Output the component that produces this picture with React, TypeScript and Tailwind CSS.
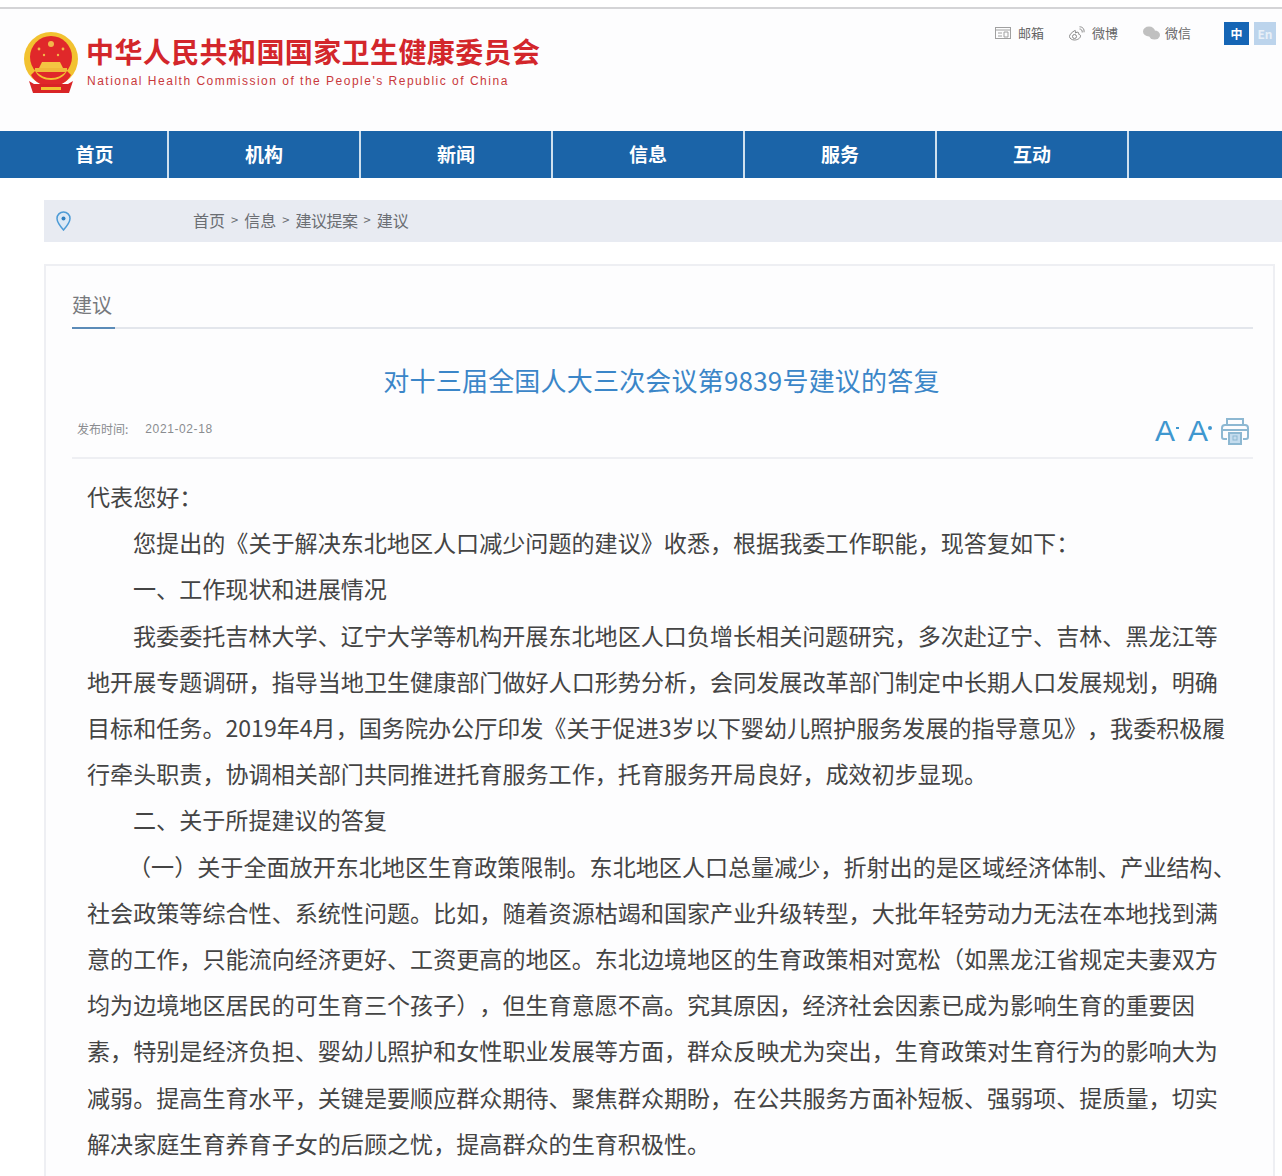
const cjk = "font-['Noto_Sans_CJK_SC','Noto_Sans_CJK_JP',sans-serif]";

const navItems = ["首页", "机构", "新闻", "信息", "服务", "互动"];

const bodyLines = [
  { text: "代表您好\uFF1A", pad: "" },
  { text: "您提出的《关于解决东北地区人口减少问题的建议》收悉\uFF0C根据我委工作职能\uFF0C现答复如下\uFF1A", pad: "pl-[46px]" },
  { text: "一、工作现状和进展情况", pad: "pl-[46px]" },
  { text: "我委委托吉林大学、辽宁大学等机构开展东北地区人口负增长相关问题研究\uFF0C多次赴辽宁、吉林、黑龙江等", pad: "pl-[46px]" },
  { text: "地开展专题调研\uFF0C指导当地卫生健康部门做好人口形势分析\uFF0C会同发展改革部门制定中长期人口发展规划\uFF0C明确", pad: "" },
  { text: "目标和任务。2019年4月\uFF0C国务院办公厅印发《关于促进3岁以下婴幼儿照护服务发展的指导意见》\uFF0C我委积极履", pad: "" },
  { text: "行牵头职责\uFF0C协调相关部门共同推进托育服务工作\uFF0C托育服务开局良好\uFF0C成效初步显现。", pad: "" },
  { text: "二、关于所提建议的答复", pad: "pl-[46px]" },
  { text: "\uFF08一\uFF09关于全面放开东北地区生育政策限制。东北地区人口总量减少\uFF0C折射出的是区域经济体制、产业结构、", pad: "pl-[41px]" },
  { text: "社会政策等综合性、系统性问题。比如\uFF0C随着资源枯竭和国家产业升级转型\uFF0C大批年轻劳动力无法在本地找到满", pad: "" },
  { text: "意的工作\uFF0C只能流向经济更好、工资更高的地区。东北边境地区的生育政策相对宽松\uFF08如黑龙江省规定夫妻双方", pad: "" },
  { text: "均为边境地区居民的可生育三个孩子\uFF09\uFF0C但生育意愿不高。究其原因\uFF0C经济社会因素已成为影响生育的重要因", pad: "" },
  { text: "素\uFF0C特别是经济负担、婴幼儿照护和女性职业发展等方面\uFF0C群众反映尤为突出\uFF0C生育政策对生育行为的影响大为", pad: "" },
  { text: "减弱。提高生育水平\uFF0C关键是要顺应群众期待、聚焦群众期盼\uFF0C在公共服务方面补短板、强弱项、提质量\uFF0C切实", pad: "" },
  { text: "解决家庭生育养育子女的后顾之忧\uFF0C提高群众的生育积极性。", pad: "" },
];

function Emblem() {
  return (
    <svg width="58" height="64" viewBox="0 0 58 64" className="shrink-0">
      <circle cx="29" cy="28" r="27" fill="#f2c230" />
      <circle cx="29" cy="26" r="21" fill="#e0282a" />
      <circle cx="29" cy="13" r="3" fill="#f2b84a" />
      <circle cx="17" cy="18" r="1.4" fill="#f2b84a" />
      <circle cx="41" cy="18" r="1.4" fill="#f2b84a" />
      <circle cx="22" cy="24" r="1.2" fill="#f2b84a" />
      <circle cx="36" cy="24" r="1.2" fill="#f2b84a" />
      <path d="M17 37h24l-3-6H20z" fill="#f4c542" />
      <path d="M13 41h32v-4H13z" fill="#f0b93a" />
      <path d="M9 44c4 8 12 11 20 11s16-3 20-11l-4-4c-3 6-9 9-16 9s-13-3-16-9z" fill="#e0282a" />
      <path d="M7 50l4 12h36l4-12-5 3H12z" fill="#d92426" />
      <path d="M19 56h20v3H19z" fill="#f2c230" />
    </svg>
  );
}

function MailIcon() {
  return (
    <svg width="16" height="14" viewBox="0 0 16 14" fill="none" stroke="#a0a0a0" strokeWidth="1">
      <rect x="0.5" y="1.5" width="15" height="11" />
      <path d="M0.500 4h15M3 7h4M3 10h4M9 6h4v5H9z" />
    </svg>
  );
}

function WeiboIcon() {
  return (
    <svg width="17" height="15" viewBox="0 0 16 15" fill="none" stroke="#8a8a8a" strokeWidth="1">
      <path d="M6.500 4.500C3.500 6 1 8.500 1 10.500c0 2 2.500 3.500 5 3.500 3 0 6-1.800 6-4 0-1.300-1.200-1.700-2-1.900.5-1.300 0-2.100-1.500-1.900L7 7c.3-1.700 0-2.800-.5-2.500z" />
      <circle cx="6" cy="10.500" r="2" />
      <path d="M11 3c1.800 0 3 1.300 2.700 3.500M11 .8c3.200 0 5 2.200 4.500 5.500" />
    </svg>
  );
}

function WechatIcon() {
  return (
    <svg width="17" height="14" viewBox="0 0 17 14" fill="#c0c0c0">
      <ellipse cx="6" cy="5.500" rx="6" ry="5" />
      <ellipse cx="11.500" cy="9" rx="5.500" ry="4.500" />
    </svg>
  );
}

function PinIcon() {
  return (
    <svg width="15" height="20" viewBox="0 0 15 20" fill="none">
      <path d="M7.500 19C4 15 1 11.500 1 7.500a6.500 6.500 0 0 1 13 0C14 11.500 11 15 7.500 19z" fill="#dbe8f5" stroke="#4d9bd6" strokeWidth="1.500" />
      <circle cx="7.500" cy="7.500" r="2" fill="#2f7fc0" />
    </svg>
  );
}

function PrintIcon() {
  return (
    <svg width="30" height="30" viewBox="0 0 30 30" fill="none" stroke="#8db8d2" strokeWidth="2">
      <path d="M7 9V3h16v6" />
      <path d="M7 23H4a2 2 0 0 1-2-2v-9a3 3 0 0 1 3-3h20a3 3 0 0 1 3 3v9a2 2 0 0 1-2 2h-3" />
      <path d="M2 14h26" />
      <rect x="9" y="17" width="12" height="11" fill="#c4dcee" />
      <rect x="13" y="20" width="4" height="4" strokeWidth="1" />
    </svg>
  );
}

export default function App() {
  return (
    <div className={`h-[1176px] w-[1282px] overflow-hidden bg-white ${cjk}`}>
      {/* Header */}
      <div className="h-[9px] border-b-2 border-[#d4d4d6]" />
      <header className="flex h-[122px] justify-between bg-[#fdfdfe]">
        <div className="flex items-start gap-[6px] pl-[22px] pt-[22px]">
          <Emblem />
          <div className="pt-[3px]">
            <div className="whitespace-nowrap text-[28px] leading-[34px] font-bold tracking-[0.4px] text-[#d3262b]">
              中华人民共和国国家卫生健康委员会
            </div>
            <div className="mt-[5px] whitespace-nowrap pl-[1px] font-['Liberation_Sans',sans-serif] text-[12px] leading-[16px] tracking-[1.5px] text-[#c9393c]">
              National Health Commission of the People's Republic of China
            </div>
          </div>
        </div>
        <div className="flex items-start pr-[6px] pt-[13px] text-[13px] text-[#666]">
          <div className="flex h-[22px] items-center gap-[7px]">
            <MailIcon />
            <span>邮箱</span>
          </div>
          <div className="ml-[24px] flex h-[22px] items-center gap-[7px]">
            <WeiboIcon />
            <span>微博</span>
          </div>
          <div className="ml-[25px] flex h-[22px] items-center gap-[5px]">
            <WechatIcon />
            <span>微信</span>
          </div>
          <div className="ml-[33px] flex gap-[5px]">
            <span className="flex h-[23px] w-[25px] items-center justify-center bg-[#1565b5] text-[12px] font-bold text-white">中</span>
            <span className="flex h-[23px] w-[22px] items-center justify-center bg-[#bcd4ec] text-[12px] font-bold text-[#e8f0f8]">En</span>
          </div>
        </div>
      </header>

      {/* Nav */}
      <nav className="flex h-[47px] bg-[#1b64a8]">
        {navItems.map((item, i) => (
          <div
            key={item}
            className={`flex h-full items-center justify-center border-r-2 border-[#cfe0ee] text-[19px] font-bold text-white ${
              i === 0 ? "w-[169px] pl-[22px]" : "w-[192px]"
            }`}
          >
            {item}
          </div>
        ))}
      </nav>

      {/* Breadcrumb */}
      <div className="pl-[44px] pt-[22px]">
        <div className="flex h-[42px] items-center bg-[#e8ebf2] pl-[12px] text-[#6b6e73]">
          <PinIcon />
          <div className="ml-[122px] -mt-[2px] flex items-center gap-[6px] whitespace-nowrap text-[16px]">
            <span>首页</span>
            <span className="text-[13px]">&gt;</span>
            <span>信息</span>
            <span className="text-[13px]">&gt;</span>
            <span className="tracking-[-0.5px]">建议提案</span>
            <span className="text-[13px]">&gt;</span>
            <span>建议</span>
          </div>
        </div>
      </div>

      {/* Article card */}
      <section className="ml-[44px] mr-[7px] mt-[22px] h-[1000px] border-x-2 border-t-2 border-[#eeeff3] bg-[#fdfdfe] pl-[26px] pr-[20px]">
        <div className="relative h-[63px] border-b-2 border-[#e3e6ec]">
          <div className="pt-[19px] text-[20px] leading-[40px] text-[#77797d]">建议</div>
          <div className="absolute -bottom-[2px] left-0 h-[2px] w-[43px] bg-[#5b8bb8]" />
        </div>
        <h1 className="mt-[33px] pr-[2px] text-center text-[26px] leading-[36px] font-normal tracking-[0.2px] text-[#3b86c8]">
          对十三届全国人大三次会议第9839号建议的答复
        </h1>
        <div className="flex h-[61px] items-start justify-between border-b-2 border-[#eeeff3]">
          <div className="flex pl-[5px] pt-[21px] text-[12px] leading-[20px] text-[#8a8c90]">
            <span>发布时间:</span>
            <span className="ml-[17px] font-['Liberation_Sans',sans-serif] tracking-[0.6px]">2021-02-18</span>
          </div>
          <div className="flex items-end pr-[3px] pt-[18px] font-['Liberation_Sans',sans-serif] text-[#3f97cf]">
            <span className="text-[30px] leading-[30px]">A</span>
            <span className="mb-[17px] ml-[1px] h-[2px] w-[3px] bg-[#3f97cf]" />
            <span className="ml-[9px] text-[30px] leading-[30px]">A</span>
            <span className="mb-[16px] h-[4px] w-[4px] rounded-full bg-[#3f97cf]" />
            <span className="ml-[8px]"><PrintIcon /></span>
          </div>
        </div>
        <div className="whitespace-nowrap pl-[15px] pt-[14px] text-[23.08px] leading-[46.2px] text-[#444] [text-spacing-trim:space-all]">
          {bodyLines.map((line) => (
            <p key={line.text} className={line.pad}>
              {line.text}
            </p>
          ))}
        </div>
      </section>
    </div>
  );
}
